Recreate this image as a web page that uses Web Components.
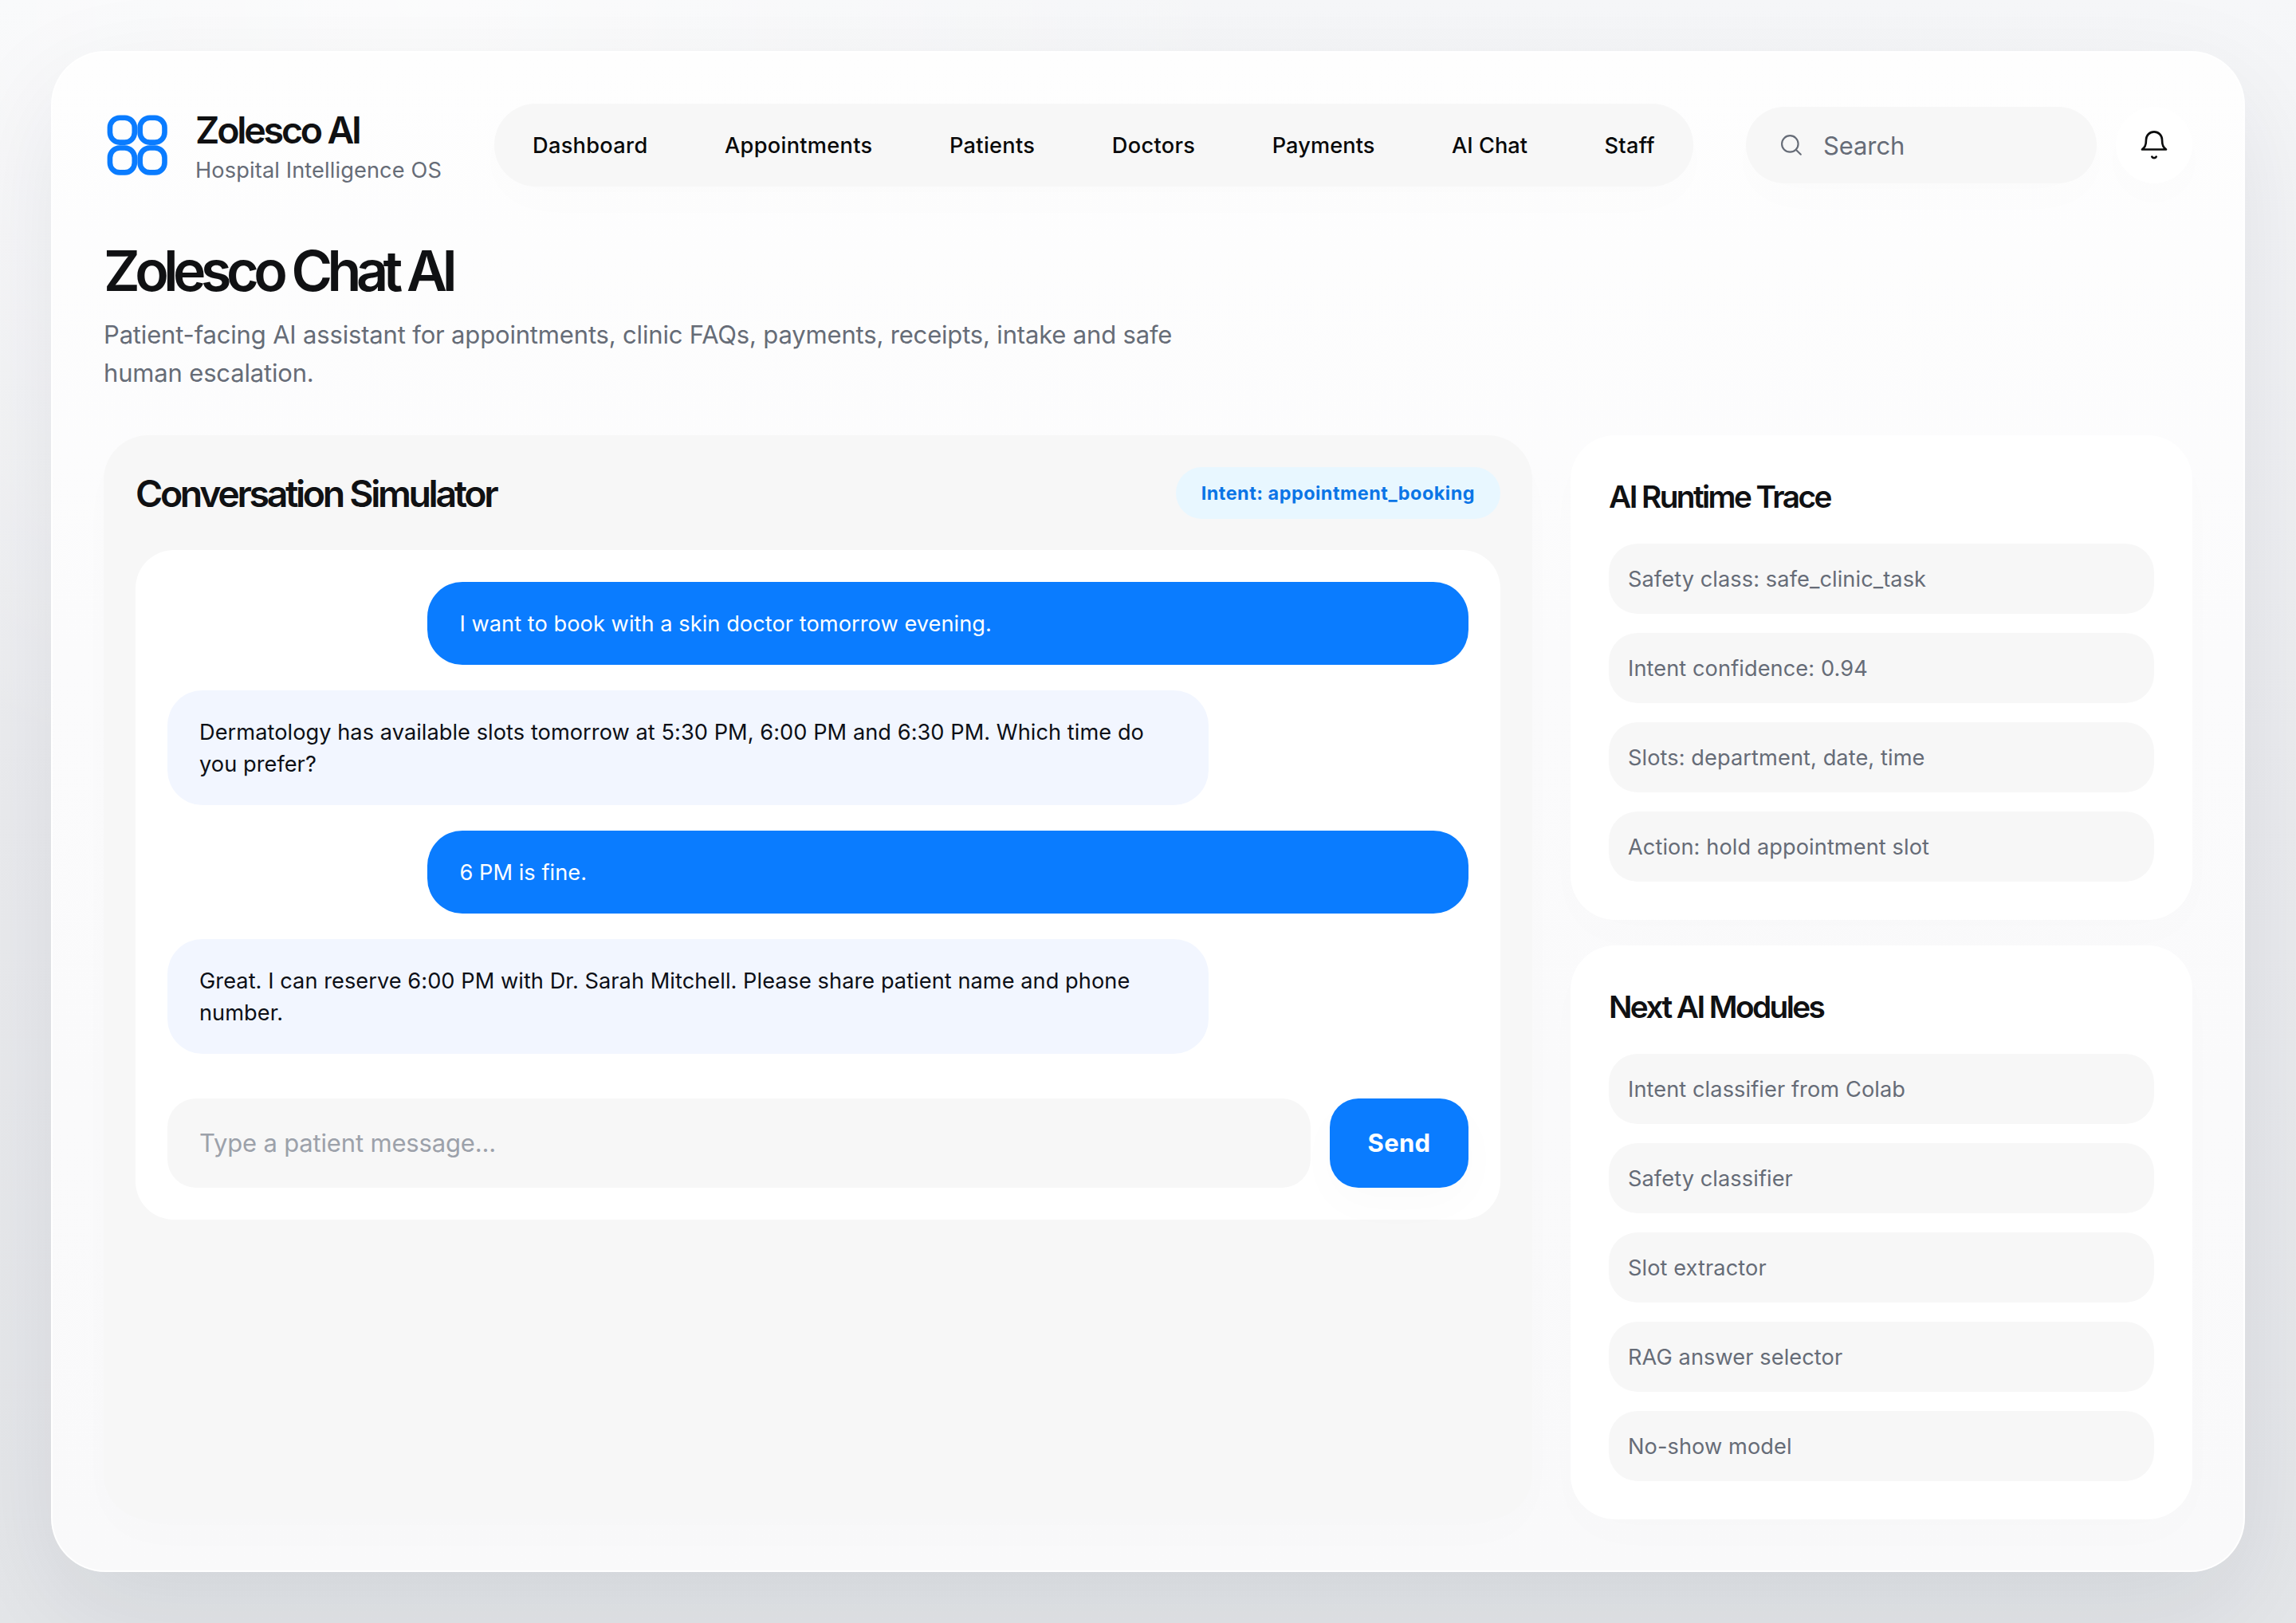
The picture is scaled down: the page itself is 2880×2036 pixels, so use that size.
<!DOCTYPE html>
<html lang="en">
<head>
  <meta charset="UTF-8">
  <meta name="viewport" content="width=device-width, initial-scale=1.0">
  <title>Zolesco AI</title>
  <style>
    :root {
      --ink: #101113;
      --muted: #666c77;
      --accent: #0a7cff;
      --surface: #f7f7f7;
      --soft-shadow: 0 20px 60px rgba(15, 23, 42, 0.013);
    }

    body {
      box-sizing: border-box;
      min-height: 2036px;
      margin: 0;
      padding: 64px;
      font-family: Inter, "Liberation Sans", sans-serif;
      color: var(--ink);
      background:
        radial-gradient(circle at 18% 0, rgba(255, 255, 255, 0.7), transparent 34%),
        linear-gradient(180deg, #f6f7f9 0%, #ebecef 50%, #e4e6e9 100%);
    }
  </style>
</head>
<body>
  <app-shell>
    <app-header slot="header">
      <app-brand slot="brand" name="Zolesco AI" tagline="Hospital Intelligence OS"></app-brand>
      <nav-bar slot="nav">
        <nav-item>Dashboard</nav-item>
        <nav-item>Appointments</nav-item>
        <nav-item>Patients</nav-item>
        <nav-item>Doctors</nav-item>
        <nav-item style="--track: 0.1px">Payments</nav-item>
        <nav-item style="--track: 0px">AI Chat</nav-item>
        <nav-item>Staff</nav-item>
      </nav-bar>
      <search-box slot="actions">Search</search-box>
      <bell-button slot="actions"></bell-button>
    </app-header>

    <page-intro slot="intro">
      <span slot="title">Zolesco Chat AI</span>
      Patient-facing AI assistant for appointments, clinic FAQs, payments, receipts, intake and safe human escalation.
    </page-intro>

    <chat-panel heading="Conversation Simulator" intent="Intent: appointment_booking">
      <chat-bubble from="patient">I want to book with a skin doctor tomorrow evening.</chat-bubble>
      <chat-bubble>Dermatology has available slots tomorrow at 5:30 PM, 6:00 PM and 6:30 PM. Which time do you prefer?</chat-bubble>
      <chat-bubble from="patient">6 PM is fine.</chat-bubble>
      <chat-bubble>Great. I can reserve 6:00 PM with Dr. Sarah Mitchell. Please share patient name and phone number.</chat-bubble>
      <chat-composer slot="composer" hint="Type a patient message..." action="Send"></chat-composer>
    </chat-panel>

    <info-card slot="side" heading="AI Runtime Trace">
      <info-row>Safety class: safe_clinic_task</info-row>
      <info-row>Intent confidence: 0.94</info-row>
      <info-row>Slots: department, date, time</info-row>
      <info-row>Action: hold appointment slot</info-row>
    </info-card>
    <info-card slot="side" heading="Next AI Modules">
      <info-row>Intent classifier from Colab</info-row>
      <info-row>Safety classifier</info-row>
      <info-row>Slot extractor</info-row>
      <info-row>RAG answer selector</info-row>
      <info-row>No-show model</info-row>
    </info-card>
  </app-shell>

  <script>
    const reset = `
      :host { box-sizing: border-box; }
      * { box-sizing: border-box; margin: 0; padding: 0; }
    `;

    // shared base: open shadow root, filled from render()
    class BaseElement extends HTMLElement {
      constructor() {
        super();
        this.root = this.attachShadow({ mode: "open" });
      }

      connectedCallback() {
        this.root.innerHTML = `<style>${reset}</style>${this.render()}`;
      }
    }

    class AppShell extends BaseElement {
      render() {
        return `
          <style>
            :host {
              display: flex;
              flex-direction: column;
              min-height: 1908px;
              padding: 64px;
              border: 2px solid rgba(255, 255, 255, 0.95);
              border-radius: 68px;
              background: linear-gradient(180deg, #fefefe 0%, #fbfbfc 40%, #f9f9fa 100%);
              box-shadow: 0 48px 140px rgba(15, 23, 42, 0.085);
            }

            main {
              display: grid;
              grid-template-columns: 1792px 780px;
              gap: 48px;
              flex: 1;
              margin-top: 54px;
            }

            aside {
              display: flex;
              flex-direction: column;
              gap: 32px;
            }
          </style>
          <slot name="header"></slot>
          <slot name="intro"></slot>
          <main>
            <slot></slot>
            <aside><slot name="side"></slot></aside>
          </main>
        `;
      }
    }

    class AppHeader extends BaseElement {
      render() {
        return `
          <style>
            :host {
              display: flex;
              align-items: center;
              justify-content: space-between;
              height: 104px;
            }

            .brand {
              width: 424px;
            }

            .actions {
              display: flex;
              align-items: center;
              gap: 24px;
            }
          </style>
          <div class="brand"><slot name="brand"></slot></div>
          <slot name="nav"></slot>
          <div class="actions"><slot name="actions"></slot></div>
        `;
      }
    }

    class AppBrand extends BaseElement {
      render() {
        return `
          <style>
            :host {
              display: flex;
              align-items: center;
              gap: 32px;
              white-space: nowrap;
            }

            svg {
              width: 84px;
              height: 84px;
              margin-left: 1px;
              fill: none;
              stroke: var(--accent);
              stroke-width: 6.8;
            }

            h2 {
              font-size: 46.5px;
              font-weight: 600;
              line-height: 62px;
              letter-spacing: -3.2px;
            }

            p {
              margin-top: 2px;
              font-size: 27.2px;
              line-height: 36px;
              letter-spacing: 0.12px;
              color: var(--muted);
            }
          </style>
          <svg viewBox="0 0 84 84">
            <rect x="7.1" y="6.9" width="31.6" height="31.6" rx="12.5"/>
            <rect x="45.7" y="6.9" width="31.6" height="31.6" rx="12.5"/>
            <rect x="7.1" y="45.6" width="31.6" height="31.6" rx="12.5"/>
            <rect x="45.7" y="45.6" width="31.6" height="31.6" rx="12.5"/>
          </svg>
          <div>
            <h2>${this.getAttribute("name")}</h2>
            <p>${this.getAttribute("tagline")}</p>
          </div>
        `;
      }
    }

    class NavBar extends BaseElement {
      render() {
        return `
          <style>
            :host {
              display: flex;
              align-items: center;
              justify-content: space-between;
              width: 1504px;
              height: 104px;
              padding: 2px 48px 0;
              border-radius: 52px;
              background: var(--surface);
              box-shadow: var(--soft-shadow);
            }
          </style>
          <slot></slot>
        `;
      }
    }

    class NavItem extends BaseElement {
      render() {
        return `
          <style>
            :host {
              display: block;
              font-size: 27.2px;
              font-weight: 500;
              line-height: 40px;
              letter-spacing: var(--track, 0.3px);
              white-space: nowrap;
              color: #08090a;
            }
          </style>
          <slot></slot>
        `;
      }
    }

    class SearchBox extends BaseElement {
      render() {
        return `
          <style>
            :host {
              display: flex;
              align-items: center;
              gap: 25px;
              width: 440px;
              height: 96px;
              padding: 0 40px;
              border-radius: 48px;
              background: var(--surface);
              box-shadow: var(--soft-shadow);
              font-size: 31px;
              letter-spacing: -0.1px;
              color: var(--muted);
            }

            svg {
              width: 32px;
              height: 32px;
              fill: none;
              stroke: currentColor;
              stroke-width: 1.6;
              stroke-linecap: round;
            }
          </style>
          <svg viewBox="0 0 24 24">
            <circle cx="11.5" cy="10.8" r="7.7"/>
            <path d="M17.2 16.5l4.4 4.3"/>
          </svg>
          <slot></slot>
        `;
      }
    }

    class BellButton extends BaseElement {
      render() {
        return `
          <style>
            :host {
              display: grid;
              place-items: center;
              width: 96px;
              height: 96px;
              border-radius: 50%;
              background: #fff;
              box-shadow: var(--soft-shadow);
            }

            svg {
              width: 40px;
              height: 40px;
              fill: none;
              stroke: #0b0c0d;
              stroke-width: 1.6;
              stroke-linecap: round;
              stroke-linejoin: round;
            }
          </style>
          <svg viewBox="0 0 24 24">
            <path d="M18 8a6 6 0 0 0-12 0c0 4.6-1.2 5.7-3 7.3h18c-1.8-1.6-3-2.7-3-7.3"/>
            <path d="M10.4 20.8a1.85 1.85 0 0 0 3.2 0"/>
          </svg>
        `;
      }
    }

    class PageIntro extends BaseElement {
      render() {
        return `
          <style>
            :host {
              display: block;
              margin-top: 71px;
            }

            h1 {
              font-size: 70px;
              font-weight: 560;
              line-height: 70px;
              letter-spacing: -6.5px;
            }

            p {
              width: 1400px;
              margin-top: 21px;
              font-size: 31px;
              line-height: 48px;
              letter-spacing: -0.17px;
              color: var(--muted);
            }
          </style>
          <h1><slot name="title"></slot></h1>
          <p><slot></slot></p>
        `;
      }
    }

    class ChatPanel extends BaseElement {
      render() {
        return `
          <style>
            :host {
              display: block;
              padding: 40px;
              border-radius: 56px;
              background: var(--surface);
              box-shadow: var(--soft-shadow);
            }

            header {
              display: flex;
              align-items: center;
              justify-content: space-between;
              height: 65px;
              margin-bottom: 39px;
            }

            h2 {
              font-size: 46.5px;
              font-weight: 600;
              letter-spacing: -3.36px;
            }

            .intent {
              padding: 0 32px;
              border-radius: 33px;
              font-size: 23.4px;
              font-weight: 700;
              line-height: 65px;
              letter-spacing: 0.5px;
              color: #0b75e6;
              background: #e8f7ff;
            }

            .thread {
              display: flex;
              flex-direction: column;
              gap: 32px;
              padding: 40px;
              border-radius: 48px;
              background: #fff;
            }
          </style>
          <header>
            <h2>${this.getAttribute("heading")}</h2>
            <span class="intent">${this.getAttribute("intent")}</span>
          </header>
          <div class="thread">
            <slot></slot>
            <slot name="composer"></slot>
          </div>
        `;
      }
    }

    class ChatBubble extends BaseElement {
      render() {
        return `
          <style>
            :host {
              display: block;
              width: 80%;
              padding: 33px 40px 31px;
              border-radius: 44px;
              font-size: 27.2px;
              line-height: 40px;
              letter-spacing: 0.05px;
              color: #0c0f16;
              background: #f2f6ff;
            }

            :host([from="patient"]) {
              align-self: flex-end;
              color: #fff;
              background: var(--accent);
            }
          </style>
          <slot></slot>
        `;
      }
    }

    class ChatComposer extends BaseElement {
      render() {
        return `
          <style>
            :host {
              display: flex;
              gap: 24px;
              margin-top: 24px;
              font-size: 31px;
              line-height: 112px;
            }

            .field {
              flex: 1;
              padding: 0 40px;
              border-radius: 36px;
              letter-spacing: -0.17px;
              color: #9ca1aa;
              background: var(--surface);
            }

            button {
              width: 174px;
              height: 112px;
              border: none;
              border-radius: 36px;
              font: inherit;
              font-weight: 700;
              letter-spacing: 0.3px;
              color: #fff;
              background: var(--accent);
              box-shadow: 0 20px 60px rgba(15, 23, 42, 0.02);
            }
          </style>
          <div class="field">${this.getAttribute("hint")}</div>
          <button>${this.getAttribute("action")}</button>
        `;
      }
    }

    class InfoCard extends BaseElement {
      render() {
        return `
          <style>
            :host {
              display: flex;
              flex-direction: column;
              gap: 24px;
              padding: 48px;
              border-radius: 56px;
              background: #fff;
              box-shadow: var(--soft-shadow);
            }

            h3 {
              margin-bottom: 6px;
              font-size: 38.8px;
              font-weight: 600;
              line-height: 58px;
              letter-spacing: -2.6px;
            }
          </style>
          <h3>${this.getAttribute("heading")}</h3>
          <slot></slot>
        `;
      }
    }

    class InfoRow extends BaseElement {
      render() {
        return `
          <style>
            :host {
              display: block;
              padding: 25px 24px 23px;
              border-radius: 36px;
              font-size: 27.2px;
              line-height: 40px;
              letter-spacing: 0.08px;
              color: var(--muted);
              background: var(--surface);
            }
          </style>
          <slot></slot>
        `;
      }
    }

    customElements.define("app-shell", AppShell);
    customElements.define("app-header", AppHeader);
    customElements.define("app-brand", AppBrand);
    customElements.define("nav-bar", NavBar);
    customElements.define("nav-item", NavItem);
    customElements.define("search-box", SearchBox);
    customElements.define("bell-button", BellButton);
    customElements.define("page-intro", PageIntro);
    customElements.define("chat-panel", ChatPanel);
    customElements.define("chat-bubble", ChatBubble);
    customElements.define("chat-composer", ChatComposer);
    customElements.define("info-card", InfoCard);
    customElements.define("info-row", InfoRow);
  </script>
</body>
</html>
